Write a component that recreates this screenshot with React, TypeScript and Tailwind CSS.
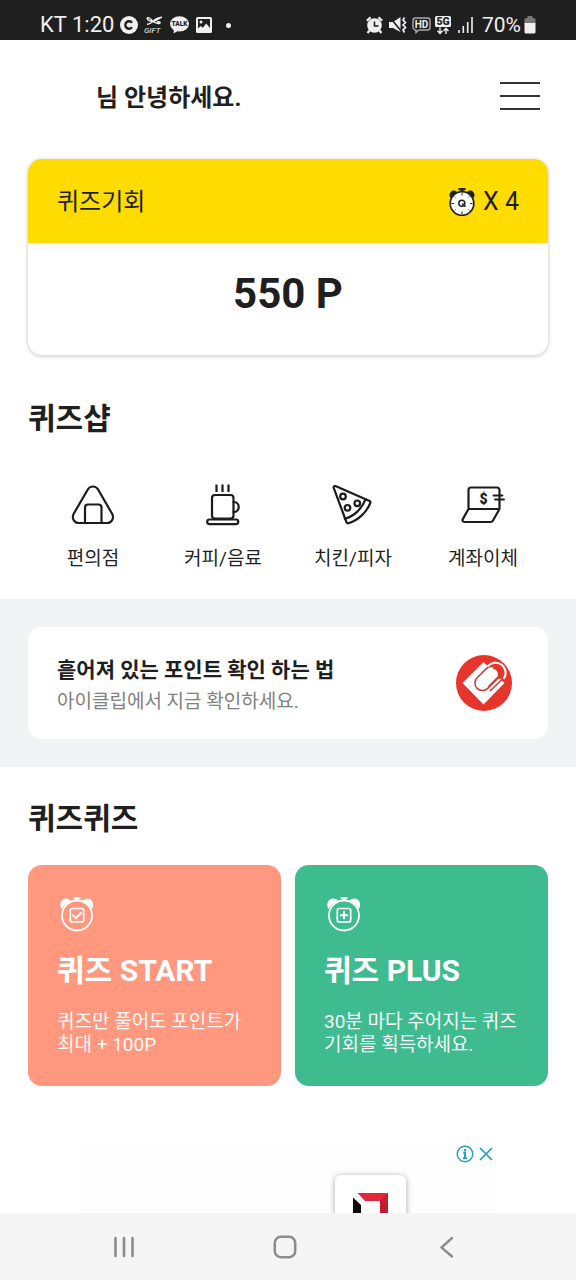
import React from 'react';

interface ShopItem {
  label: string;
  icon: React.ReactNode;
}

interface QuizCardProps {
  title: string;
  lines: string[];
  color: string;
  mark: React.ReactNode;
}

const StatusBar: React.FC = () => (
  <div className="h-10 shrink-0 bg-[#1f1f1f] text-[#f0f0f0] px-10 pt-[10px] flex items-center justify-between">
    <div className="flex items-center">
      <span className="text-[22px] leading-[30px] mr-[6px]">KT 1:20</span>
      <svg className="w-[18px] h-[18px] mr-[6px]" viewBox="0 0 18 18">
        <circle cx="9" cy="9" r="9" fill="#f0f0f0" />
        <path d="M12 6.800A3.700 3.700 0 1 0 12 11.200" fill="none" stroke="#1f1f1f" strokeWidth="2.4" />
      </svg>
      <svg className="w-5 h-[18px] mr-[6px]" viewBox="0 0 20 18" fill="none" stroke="#f0f0f0">
        <path d="M9 5.500C6 1.500 3 .8 3.200 2.600c.2 1.700 3.500 3 5.800 2.900 3-.2 8-4 9-4.500M9 5.500c1.500-2 4-3.500 8-4M9 5.500C7 7.500 5 8 3 8.500M9 5.500c3 2 5 2.500 7 1.500.5-1-1-1.500-3-1" strokeWidth="1.4" />
        <text x="0" y="17" fontSize="8" fontStyle="italic" fill="#f0f0f0" stroke="none">GIFT</text>
      </svg>
      <svg className="w-[19px] h-[18px] mr-[7px]" viewBox="0 0 19 18">
        <ellipse cx="9.500" cy="7.800" rx="9.500" ry="7.600" fill="#f0f0f0" />
        <path d="M4 13l-.5 4.500 5-3z" fill="#f0f0f0" />
        <text x="9.500" y="10.300" textAnchor="middle" fontSize="6.500" fontWeight="900" fill="#1f1f1f">TALK</text>
      </svg>
      <svg className="w-4 h-4 mr-[14px]" viewBox="0 0 16 16">
        <rect width="16" height="16" rx="1.500" fill="#f0f0f0" />
        <path d="M2 2h12v9l-3.800-4.500-3.400 4.300-2-1.900L2 11.500z" fill="#1f1f1f" />
        <circle cx="5" cy="5" r="1.500" fill="#f0f0f0" />
      </svg>
      <span className="w-[5px] h-[5px] rounded-full bg-[#f0f0f0]" />
    </div>
    <div className="flex items-center">
      <svg className="w-[17px] h-[18px] mr-[6px]" viewBox="0 0 17 18">
        <circle cx="8.500" cy="9.500" r="7.300" fill="#f0f0f0" />
        <path d="M.8 4.800L4.600 1.400M16.200 4.800l-3.800-3.400M3.500 14.500l-2 2.500M13.500 14.500l2 2.500" stroke="#f0f0f0" strokeWidth="2.200" />
        <path d="M8.500 5.500V10h4" fill="none" stroke="#1f1f1f" strokeWidth="1.600" />
      </svg>
      <svg className="w-[18px] h-[18px] mr-[5px]" viewBox="0 0 18 18">
        <path d="M0 6h4l7.500-5v15L4 12H0z" fill="#f0f0f0" />
        <path d="M1 1.500l11.500 14" stroke="#1f1f1f" strokeWidth="1.600" />
        <path d="M15.500 1.500l-1.500 2.500 2.500 2.500L14 9l2.500 2.500L14 14l1.500 2.500" fill="none" stroke="#f0f0f0" strokeWidth="1.700" />
      </svg>
      <svg className="w-[19px] h-[18px] mr-1" viewBox="0 0 19 18">
        <path d="M3.500 2h12a2.500 2.500 0 0 1 2.500 2.500v7a2.500 2.500 0 0 1-2.500 2.500H7l-3 2.500V14a3 3 0 0 1-3-2.500v-7A2.500 2.500 0 0 1 3.500 2z" fill="none" stroke="#aaa" strokeWidth="1.400" />
        <text x="9.500" y="11.700" textAnchor="middle" fontSize="10" fontWeight="700" fill="#f0f0f0">HD</text>
      </svg>
      <svg className="w-4 h-[19px] mr-[7px]" viewBox="0 0 16 19">
        <rect width="16" height="11" rx="1.500" fill="#f0f0f0" />
        <text x="8" y="9.200" textAnchor="middle" fontSize="10.500" fontWeight="900" fill="#1f1f1f">5G</text>
        <path d="M5 11.500V17M2.500 14.800L5 17.500l2.500-2.700M11 18v-5.500M8.500 15L11 12.300l2.500 2.700" fill="none" stroke="#f0f0f0" strokeWidth="1.400" />
      </svg>
      <svg className="w-4 h-4 mr-2" viewBox="0 0 16 16">
        <path d="M1 13v3M5.300 9v7M9.700 5v11M14 0v16" stroke="#f0f0f0" strokeWidth="1.600" />
      </svg>
      <span className="text-[21px] leading-[30px] mr-[3px]">70%</span>
      <svg className="w-3 h-[18px]" viewBox="0 0 12 18">
        <path d="M3.500 0h5v2H10a1.500 1.500 0 0 1 1.500 1.500V8H.5V3.500A1.500 1.500 0 0 1 2 2h1.500z" fill="#777" />
        <path d="M.5 7h11v9a1.500 1.500 0 0 1-1.500 1.500H2A1.500 1.500 0 0 1 .5 16z" fill="#f0f0f0" />
      </svg>
    </div>
  </div>
);

const ChanceClock: React.FC = () => (
  <svg className="w-[26px] h-7" viewBox="0 0 26 28">
    <circle cx="4.800" cy="7" r="4.400" fill="#222" />
    <circle cx="21.200" cy="7" r="4.400" fill="#222" />
    <path d="M9.500 0h7v2.300h-2v2h-3v-2h-2z" fill="#222" />
    <circle cx="13" cy="15.500" r="11.800" fill="#fff" stroke="#222" strokeWidth="1.700" />
    <path d="M13 5v2.500M13 23.500V26M2.500 15.500H5M21 15.500h2.500" stroke="#222" strokeWidth="1" />
    <path d="M5.500 8.500l1 1M20.500 8.500l-1 1M5.500 22.500l1-1M20.500 22.500l-1-1" stroke="#222" strokeWidth=".8" />
    <circle cx="12.800" cy="15.300" r="3" fill="none" stroke="#222" strokeWidth="1.500" />
    <path d="M13.200 15.600l3.300 3.100" stroke="#222" strokeWidth="1.600" />
  </svg>
);

const iconProps = {
  className: 'w-12 h-12',
  viewBox: '0 0 48 48',
  fill: 'none',
  stroke: '#1c1c1c',
  strokeWidth: 2.2,
  strokeLinecap: 'round' as const,
  strokeLinejoin: 'round' as const,
};

const shopItems: ShopItem[] = [
  {
    label: '편의점',
    icon: (
      <svg {...iconProps}>
        <path d="M18.800 8.500c2.500-4 7.800-4 10.300 0l14 24.300c2.200 4-.2 9.200-4.900 9.200h-28.500C5 42 2.500 37 4.700 32.800z" />
        <path d="M16 42V26.500a3 3 0 0 1 3-3h10.500a3 3 0 0 1 3 3V42" />
      </svg>
    ),
  },
  {
    label: '커피/음료',
    icon: (
      <svg {...iconProps}>
        <path d="M17.500 3.500v7.500M23.500 3.500v7.500M29.500 3.500v7.500" strokeLinecap="butt" />
        <path d="M16 14h15.500a3 3 0 0 1 3 3v17.500a3 3 0 0 1-3 3H16a3 3 0 0 1-3-3V17a3 3 0 0 1 3-3z" />
        <path d="M34.500 21c7 0 7 10 0 10" />
        <path d="M10.500 38.500h26.500a2.300 2.300 0 0 1 0 4.600H10.500a2.300 2.300 0 0 1 0-4.600z" />
      </svg>
    ),
  },
  {
    label: '치킨/피자',
    icon: (
      <svg {...iconProps}>
        <path d="M5.500 5c-.9.300-1 1-.8 1.900L17.400 41c.3 1 1 1.500 2 1.300C29 39.500 37.500 31.500 41.300 22c.3-.9.200-1.500-.7-2L6.500 5z" />
        <path d="M15.800 37.800C25 35.500 33 27.500 36.500 18.300" />
        <circle cx="14" cy="15.500" r="2.800" />
        <circle cx="18.500" cy="26.800" r="2.800" />
        <circle cx="28.300" cy="22.300" r="2.800" />
      </svg>
    ),
  },
  {
    label: '계좌이체',
    icon: (
      <svg {...iconProps}>
        <path d="M9.500 27V9a2.500 2.500 0 0 1 2.500-2.500h26A2.500 2.500 0 0 1 40.500 9v19L34 39.500a3 3 0 0 1-2.500 1.500H5.500c-1.800 0-2.500-1.500-1.700-2.900L9.500 28h31" />
        <path d="M34.500 14.500h9M36 18.500h9" strokeWidth="1.900" />
        <text x="24.500" y="22.500" textAnchor="middle" fontSize="14" fontWeight="900" fill="#1c1c1c" stroke="none">$</text>
      </svg>
    ),
  },
];

const ClipLogo: React.FC = () => (
  <svg className="w-14 h-14" viewBox="0 0 56 56" fill="none">
    <circle cx="28" cy="28" r="28" fill="#e8352b" />
    <path d="M27.500 7L48.500 28 27.500 49.500 6.500 28z" fill="#fff" />
    {/* red ground behind the upper loops */}
    <path d="M31 11l4-3c6-3 14 2 14 8 0 3-1 5-3 7l-4 1z" fill="#e8352b" />
    {/* clip body */}
    <rect x="-7.500" y="-14" width="15" height="28" rx="7.500" transform="translate(31 23.500) rotate(45)" fill="#fff" stroke="#c83b34" strokeWidth="1.500" />
    {/* loops */}
    <path d="M31.500 11.500c4-4.500 10.500-5 14.500-1.500s5 9.500 1.500 14" stroke="#fff" strokeWidth="2" />
    <path d="M37 13.500c3-.5 6.500 2.500 5.500 7" stroke="#e8352b" strokeWidth="1.600" />
    <path d="M43 21L32.500 31.500" stroke="#c83b34" strokeWidth="1.400" />
    <path d="M46 24.500L34 36" stroke="#c83b34" strokeWidth="1.600" />
  </svg>
);

const QuizCard: React.FC<QuizCardProps> = ({ title, lines, color, mark }) => (
  <a href="#" className={`block flex-1 rounded-[14px] px-[29px] py-[30px] text-white ${color}`}>
    <svg className="w-10 h-10" viewBox="0 0 40 40" fill="none" stroke="#fff">
      <path d="M4.500 14C1.500 9 4.500 3.500 9 3.500c2.500 0 4.500 1 5.500 2.500M35 14C38 9 35 3.500 30.500 3.500c-2.500 0-4.500 1-5.500 2.500C29 7 32.500 10 35 14M14.500 6C10.500 7 7 10 4.500 14" fill="#fff" stroke="none" />
      <path d="M16.500 2h7v1.800h-2V6h-3V3.800h-2z" fill="#fff" stroke="none" />
      <circle cx="20" cy="20.500" r="15" strokeWidth="1.800" />
      <rect x="13.300" y="13.500" width="13.400" height="13.400" rx="2" strokeWidth="1.700" />
      {mark}
    </svg>
    <h3 className="mt-[14px] text-[30px] leading-[44px] font-bold">{title}</h3>
    <p className="mt-[17px] text-[19px] leading-[23px] opacity-95">
      {lines.map((line) => (
        <span key={line} className="block whitespace-nowrap">{line}</span>
      ))}
    </p>
  </a>
);

export default function App() {
  return (
    <div className="h-screen flex flex-col overflow-hidden bg-white text-[#1f1f1f] font-[Roboto,'Noto_Sans_CJK_KR',sans-serif]">
      <StatusBar />

      <main className="flex-1 min-h-0 overflow-y-auto [scrollbar-width:none]">
        {/* Header */}
        <header className="h-28 pl-24 pr-9 flex items-center justify-between">
          <h1 className="pt-1 text-2xl font-bold">님 안녕하세요.</h1>
          <button type="button" aria-label="메뉴">
            <svg className="w-10 h-8" viewBox="0 0 40 32" stroke="#333" strokeWidth="2">
              <path d="M0 3h40M0 16h40M0 29h40" />
            </svg>
          </button>
        </header>

        {/* Points */}
        <section className="mx-7 mt-[7px] rounded-[14px] overflow-hidden bg-white shadow-[0_1px_4px_rgba(0,0,0,0.25)]">
          <div className="h-[84px] pt-[2px] px-[29px] bg-[#fedc00] flex items-center justify-between text-2xl">
            <span>퀴즈기회</span>
            <span className="flex items-center gap-2">
              <ChanceClock />
              <span className="text-[25px]">X 4</span>
            </span>
          </div>
          <p className="h-28 pb-3 flex items-center justify-center text-[42px] font-bold">550 P</p>
        </section>

        {/* Shop */}
        <section className="px-7 pt-[42px]">
          <h2 className="text-[30px] leading-[44px] font-bold">퀴즈샵</h2>
          <div className="mt-10 pb-[26px] grid grid-cols-4">
            {shopItems.map((item) => (
              <a key={item.label} href="#" className="flex flex-col items-center gap-4 text-[19px] leading-7">
                {item.icon}
                <span>{item.label}</span>
              </a>
            ))}
          </div>
        </section>

        {/* Banner */}
        <section className="bg-[#f2f3f5] px-7 py-7">
          <a href="#" className="h-28 rounded-[14px] bg-white pl-[29px] pr-9 flex items-center justify-between">
            <span className="pt-[6px]">
              <strong className="block text-[21px] leading-8 font-bold">흩어져 있는 포인트 확인 하는 법</strong>
              <span className="block text-[19px] leading-8 text-[#808080]">아이클립에서 지금 확인하세요.</span>
            </span>
            <ClipLogo />
          </a>
        </section>

        {/* Quiz */}
        <section className="px-7 pt-[30px]">
          <h2 className="text-[30px] leading-[44px] font-bold">퀴즈퀴즈</h2>
          <div className="mt-6 flex gap-[14px]">
            <QuizCard
              title="퀴즈 START"
              lines={['퀴즈만 풀어도 포인트가', '최대 + 100P']}
              color="bg-[#ff987e]"
              mark={<path d="M15.500 19.800l3.500 3.400 5.500-5.700" strokeWidth="1.900" />}
            />
            <QuizCard
              title="퀴즈 PLUS"
              lines={['30분 마다 주어지는 퀴즈', '기회를 획득하세요.']}
              color="bg-[#3fbb90]"
              mark={<path d="M20 16.200v8M16 20.200h8" strokeWidth="1.900" />}
            />
          </div>
        </section>

        {/* Ad */}
        <aside className="mx-20 mt-[59px] bg-[#fefefe]">
          <div className="flex justify-end gap-1 pr-[2px]">
            <button type="button" aria-label="광고 정보">
              <svg className="w-[18px] h-[18px]" viewBox="0 0 18 18" fill="none" stroke="#24a0b5">
                <circle cx="9" cy="9" r="7.800" strokeWidth="1.400" />
                <path d="M9 4v2.200M7.200 7.800H9v5.400M7 13.300h4" strokeWidth="1.900" />
              </svg>
            </button>
            <button type="button" aria-label="광고 닫기">
              <svg className="w-4 h-[18px]" viewBox="0 0 16 18" stroke="#24a0b5" strokeWidth="1.700">
                <path d="M2 3l12 12M14 3L2 15" />
              </svg>
            </button>
          </div>
          <div className="ml-auto mr-[90px] mt-3 w-[71px] h-[71px] rounded-md bg-white shadow-[0_1px_6px_rgba(0,0,0,0.35)] flex items-center justify-center">
            <svg className="w-9 h-9" viewBox="0 0 36 36">
              <path d="M4.500 0H35v36h-8V8H12z" fill="#e3263c" />
              <path d="M35 0v36h-8V8z" fill="#c1202f" />
              <path d="M0 4.500L8 12v24H0z" fill="#0b0b0b" />
            </svg>
          </div>
        </aside>
      </main>

      {/* System navigation */}
      <nav className="h-[67px] shrink-0 bg-[#f5f5f5] pl-[43px] pr-12 grid grid-cols-3">
        <button type="button" aria-label="최근 앱" className="flex items-center justify-center">
          <svg className="w-6 h-6" viewBox="0 0 24 24" stroke="#8c8c8c" strokeWidth="2.600" strokeLinecap="round">
            <path d="M3.500 3v18M12 3v18M20.500 3v18" />
          </svg>
        </button>
        <button type="button" aria-label="홈" className="flex items-center justify-center">
          <svg className="w-6 h-6" viewBox="0 0 24 24" fill="none" stroke="#8c8c8c" strokeWidth="2.500">
            <rect x="1.800" y="1.800" width="20.400" height="20.400" rx="6" />
          </svg>
        </button>
        <button type="button" aria-label="뒤로" className="flex items-center justify-center">
          <svg className="w-6 h-6" viewBox="0 0 24 24" fill="none" stroke="#8c8c8c" strokeWidth="2.400" strokeLinecap="round">
            <path d="M17 3L6.500 12.500 17 21.500" />
          </svg>
        </button>
      </nav>
    </div>
  );
}
